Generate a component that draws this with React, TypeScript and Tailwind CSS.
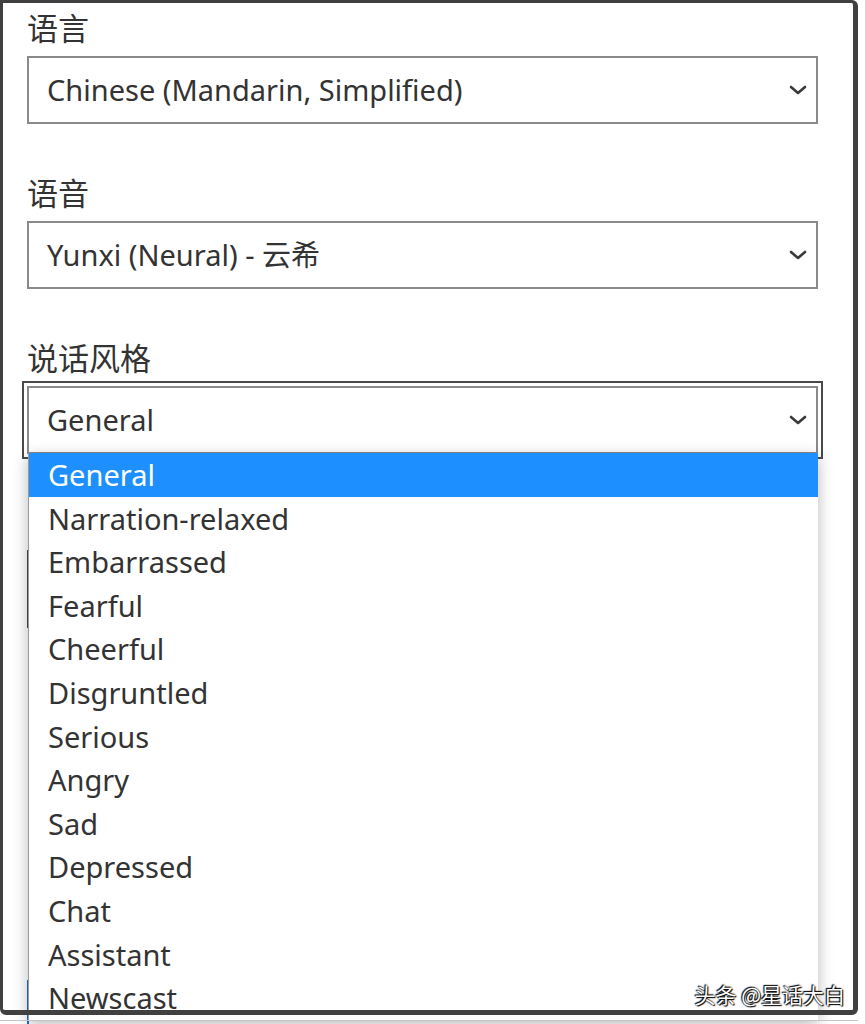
import React from 'react';

const latin = "font-['Noto_Sans','Noto_Sans_CJK_SC',sans-serif]";
const cjk = "font-['Noto_Sans_CJK_SC',sans-serif]";

const styles = [
  'General',
  'Narration-relaxed',
  'Embarrassed',
  'Fearful',
  'Cheerful',
  'Disgruntled',
  'Serious',
  'Angry',
  'Sad',
  'Depressed',
  'Chat',
  'Assistant',
  'Newscast',
];

const Chevron = () => (
  <svg width="18" height="10" viewBox="0 0 18 10" fill="none">
    <path d="M2 2 L9 8 L16 2" stroke="#3a3a3a" strokeWidth="2.6" strokeLinecap="round" strokeLinejoin="round" />
  </svg>
);

interface FieldProps {
  label: string;
  value: string;
  focused?: boolean;
  children?: React.ReactNode;
}

const Field: React.FC<FieldProps> = ({ label, value, focused, children }) => (
  <div className="relative">
    <div className={`h-[40px] text-[31px] leading-[40px] text-[#333] ${cjk}`}>{label}</div>
    <div
      className={`mt-[9px] flex h-[68px] items-center justify-between border-2 border-[#8a8a8a] bg-white pl-[18px] pr-[9px] ${
        focused ? 'outline-2 outline-solid outline-offset-[3px] outline-[#4a4a4a]' : ''
      }`}
    >
      <span className={`text-[29px] text-[#333] ${latin}`}>{value}</span>
      <Chevron />
    </div>
    {children}
  </div>
);

export default function App() {
  return (
    <div className="relative h-[1024px] w-[865px] overflow-hidden bg-white">
      <div className="flex flex-col gap-[48px] pl-[27px] pr-[47px] pt-[7px]">
        <Field label="语言" value="Chinese (Mandarin, Simplified)" />
        <Field label="语音" value="Yunxi (Neural) - 云希" />
        <Field label="说话风格" value="General" focused>
          {/* open option list */}
          <div className="absolute left-[1px] right-0 top-[116px] z-10 border-l border-[#9a9a9a] bg-white shadow-[0_4px_14px_rgba(0,0,0,0.28)]">
            {styles.map((s, i) => (
              <div
                key={s}
                className={`flex h-[43.6px] items-center pl-[19px] text-[29px] ${latin} ${
                  i === 0 ? 'bg-[#1e8fff] text-white' : 'text-[#333]'
                }`}
              >
                {s}
              </div>
            ))}
          </div>
        </Field>
        {/* controls hidden behind the list */}
        <div className="mt-[48px] h-[78px] border-l-2 border-[#4a4a4a]" />
        <div className="mt-[304px] h-[60px] border-l-2 border-[#1a6fc9]" />
      </div>

      {/* screenshot frame */}
      <div className="pointer-events-none absolute left-0 top-0 z-20 h-[1015px] w-[858px] rounded-b-[6px] rounded-tr-[6px] border-b-[5px] border-l-[3px] border-r-[5px] border-t-[3px] border-[#404040]" />
      <div className="absolute left-0 top-[1020px] z-20 h-px w-[858px] bg-[#c4c4c4]" />

      {/* watermark */}
      <div
        className={`absolute bottom-[17px] right-[20px] z-30 text-[21px] leading-[26px] text-white ${cjk} [text-shadow:0_0_2px_#000,1px_1px_1px_#000,-1px_-1px_1px_#000]`}
      >
        头条 @星话大白
      </div>
    </div>
  );
}
